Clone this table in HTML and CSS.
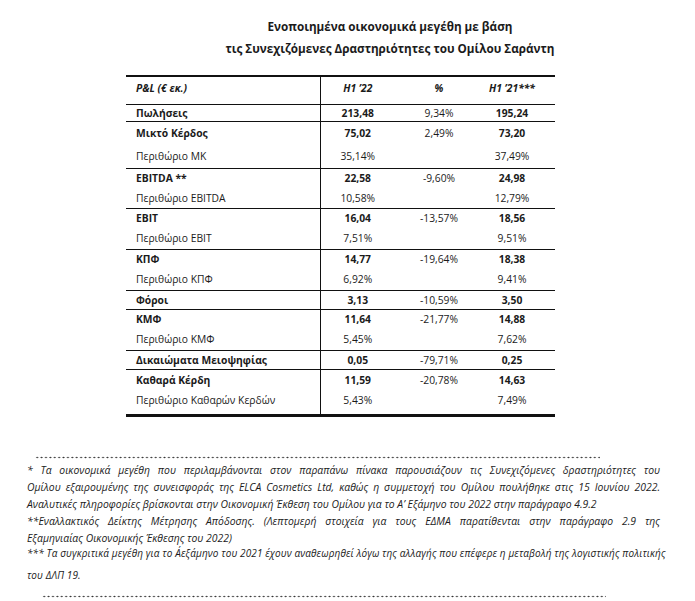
FILE: index.html
```html
<!DOCTYPE html>
<html lang="el">
<head>
<meta charset="utf-8">
<title>Ενοποιημένα οικονομικά μεγέθη</title>
<link rel="stylesheet" href="styles.css">
</head>
<body>
<div class="page">
  <h1 class="title">Ενοποιημένα οικονομικά μεγέθη με βάση<br>τις Συνεχιζόμενες Δραστηριότητες του Ομίλου Σαράντη</h1>

  <table class="pl">
    <colgroup>
      <col class="c1"><col class="c2"><col class="c3"><col class="c4">
    </colgroup>
    <thead>
      <tr class="head">
        <th class="lbl">P&amp;L (€ εκ.)</th>
        <th>H1 ’22</th>
        <th>%</th>
        <th class="last">H1 ’21***</th>
      </tr>
    </thead>
    <tbody>
      <tr class="grp h17 b">
        <td class="lbl">Πωλήσεις</td><td>213,48</td><td class="n">9,34%</td><td class="last">195,24</td>
      </tr>
      <tr class="grp h23 b">
        <td class="lbl">Μικτό Κέρδος</td><td>75,02</td><td class="n">2,49%</td><td class="last">73,20</td>
      </tr>
      <tr class="h24">
        <td class="lbl">Περιθώριο ΜΚ</td><td>35,14%</td><td></td><td class="last">37,49%</td>
      </tr>
      <tr class="grp b">
        <td class="lbl">EBITDA **</td><td>22,58</td><td class="n">-9,60%</td><td class="last">24,98</td>
      </tr>
      <tr>
        <td class="lbl">Περιθώριο EBITDA</td><td>10,58%</td><td></td><td class="last">12,79%</td>
      </tr>
      <tr class="grp b">
        <td class="lbl">EBIT</td><td>16,04</td><td class="n">-13,57%</td><td class="last">18,56</td>
      </tr>
      <tr class="h21">
        <td class="lbl">Περιθώριο EBIT</td><td>7,51%</td><td></td><td class="last">9,51%</td>
      </tr>
      <tr class="grp b">
        <td class="lbl">ΚΠΦ</td><td>14,77</td><td class="n">-19,64%</td><td class="last">18,38</td>
      </tr>
      <tr class="h21">
        <td class="lbl">Περιθώριο ΚΠΦ</td><td>6,92%</td><td></td><td class="last">9,41%</td>
      </tr>
      <tr class="grp h19 b">
        <td class="lbl">Φόροι</td><td>3,13</td><td class="n">-10,59%</td><td class="last">3,50</td>
      </tr>
      <tr class="grp b">
        <td class="lbl">ΚΜΦ</td><td>11,64</td><td class="n">-21,77%</td><td class="last">14,88</td>
      </tr>
      <tr class="h21">
        <td class="lbl">Περιθώριο ΚΜΦ</td><td>5,45%</td><td></td><td class="last">7,62%</td>
      </tr>
      <tr class="grp h19 b">
        <td class="lbl">Δικαιώματα Μειοψηφίας</td><td>0,05</td><td class="n">-79,71%</td><td class="last">0,25</td>
      </tr>
      <tr class="grp h21 b">
        <td class="lbl">Καθαρά Κέρδη</td><td>11,59</td><td class="n">-20,78%</td><td class="last">14,63</td>
      </tr>
      <tr class="h25 end">
        <td class="lbl">Περιθώριο Καθαρών Κερδών</td><td>5,43%</td><td></td><td class="last">7,49%</td>
      </tr>
    </tbody>
  </table>

  <div class="dots dots-top"></div>

  <div class="notes">
    <p class="note">
      <span class="ln full">* Τα οικονομικά μεγέθη που περιλαμβάνονται στον παραπάνω πίνακα παρουσιάζουν τις Συνεχιζόμενες δραστηριότητες του</span>
      <span class="ln full">Ομίλου εξαιρουμένης της συνεισφοράς της ELCA Cosmetics Ltd, καθώς η συμμετοχή του Ομίλου πουλήθηκε στις 15 Ιουνίου 2022.</span>
      <span class="ln">Αναλυτικές πληροφορίες βρίσκονται στην Οικονομική Έκθεση του Ομίλου για το Α’ Εξάμηνο του 2022 στην παράγραφο 4.9.2</span>
    </p>
    <p class="note">
      <span class="ln full">**Εναλλακτικός Δείκτης Μέτρησης Απόδοσης. (Λεπτομερή στοιχεία για τους ΕΔΜΑ παρατίθενται στην παράγραφο 2.9 της</span>
      <span class="ln">Εξαμηνιαίας Οικονομικής Έκθεσης του 2022)</span>
    </p>
    <p class="note small">
      <span class="ln">*** Τα συγκριτικά μεγέθη για το Α΄εξάμηνο του 2021 έχουν αναθεωρηθεί λόγω της αλλαγής που επέφερε η μεταβολή της λογιστικής πολιτικής</span>
      <span class="ln">του ΔΛΠ 19.</span>
    </p>
  </div>

  <div class="dots dots-bottom"></div>
</div>
</body>
</html>
```

FILE: styles.css
```css
html, body {
  margin: 0;
  padding: 0;
  background: #ffffff;
}

body {
  font-family: "Open Sans", "Noto Sans", "DejaVu Sans", sans-serif;
  color: #1b1b1b;
}

.page {
  width: 695px;
  padding-top: 15px;
}

.title {
  margin: 0 0 16px 85px;
  font-size: 11.7px;
  line-height: 22px;
  font-weight: 700;
  text-align: center;
}

/* ---------- table ---------- */
.pl {
  margin-left: 126px;
  width: 429px;
  border-collapse: collapse;
  table-layout: fixed;
  border-top: 2px solid #111;
  border-bottom: 3px solid #111;
  font-size: 10.3px;
}

.c1 { width: 194px; }
.c2 { width: 75px; }
.c3 { width: 88px; }
.c4 { width: 72px; }

.pl th,
.pl td {
  padding: 0;
  text-align: center;
  white-space: nowrap;
  vertical-align: middle;
}

.pl .lbl {
  text-align: left;
  padding-left: 10px;
  border-right: 1px solid #111;
}

.pl .last {
  padding-right: 14px;
}

.head th {
  height: 28px;
  font-style: italic;
  font-weight: 700;
  vertical-align: top;
  padding-top: 4px;
  box-sizing: border-box;
}

.pl tr { height: 20px; }
.pl tr.h17 { height: 17px; }
.pl tr.h19 { height: 19px; }
.pl tr.h21 { height: 21px; }
.pl tr.h23 { height: 23px; }
.pl tr.h24 { height: 24px; }
.pl tr.h25 { height: 25px; }

.pl tr.grp td {
  border-top: 1px solid #111;
}

.pl tr.end td {
  vertical-align: top;
  padding-top: 3px;
}

.pl tr.b td { font-weight: 700; }
.pl tr.b td.n { font-weight: 400; }

/* ---------- notes ---------- */
.dots {
  height: 3px;
  background-image: radial-gradient(circle, #333 0.75px, transparent 1.05px);
  background-size: 4.4px 3px;
  background-repeat: repeat-x;
}

.dots-top {
  margin: 39px 0 0 35px;
  width: 565px;
}

.dots-bottom {
  margin: 9px 0 0 42px;
  width: 564px;
}

.notes {
  margin: 3px 0 0 27px;
  width: 633px;
  font-style: italic;
  font-size: 10.4px;
  line-height: 17px;
}

.note {
  margin: 0;
}

.ln {
  display: block;
  white-space: nowrap;
}

.ln.full {
  text-align: justify;
  text-align-last: justify;
}

.note.small {
  font-size: 10px;
  line-height: 22px;
  letter-spacing: 0.12px;
  margin-top: -5px;
}
```
